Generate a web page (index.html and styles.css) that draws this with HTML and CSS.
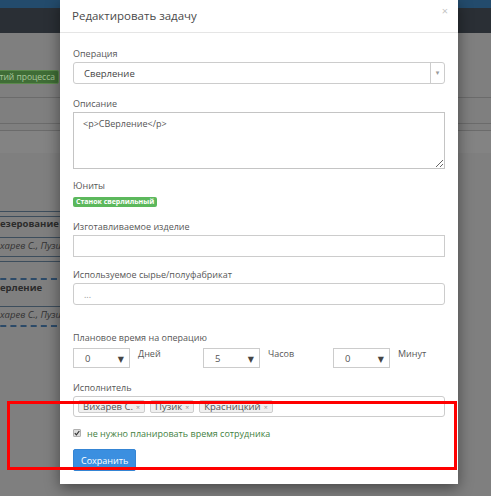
FILE: index.html
```html
<!DOCTYPE html>
<html lang="ru">
<head>
    <meta charset="UTF-8">
    <meta name="viewport" content="width=device-width, initial-scale=1.0">
    <title>Редактировать задачу</title>
    <link rel="stylesheet" href="styles.css">
</head>
<body>
    <div class="page">
        <div class="topline"></div>
        <div class="topbar"></div>
        <div class="toolbar">
            <span class="state-badge">Просмотр событий процесса</span>
        </div>
        <div class="rule"></div>
        <div class="filters"></div>
        <div class="rule"></div>
        <div class="subrow"></div>
        <div class="rule"></div>
        <div class="shade"></div>
        <div class="board">
            <div class="double"></div>
            <div class="task-title">езерование</div>
            <div class="task-people">харев С., Пузик</div>
            <div class="double"></div>
            <div class="dash"></div>
            <div class="task-title tall">ерление</div>
            <div class="task-people">харев С., Пузик</div>
            <div class="dash"></div>
        </div>
    </div>

    <div class="modal">
        <div class="modal-header">
            <span class="modal-title">Редактировать задачу</span>
            <span class="close">×</span>
        </div>
        <div class="modal-body">
            <div class="form-group">
                <label>Операция</label>
                <div class="combo">
                    <span class="combo-value">Сверление</span>
                    <span class="combo-arrow">▾</span>
                </div>
            </div>
            <div class="form-group tight">
                <label>Описание</label>
                <textarea class="text-area" readonly>&lt;p&gt;СВерление&lt;/p&gt;</textarea>
            </div>
            <div class="form-group">
                <label>Юниты</label>
                <span class="unit-badge">Станок сверлильный</span>
            </div>
            <div class="form-group loose">
                <label>Изготавливаемое изделие</label>
                <div class="field square"></div>
            </div>
            <div class="form-group wide">
                <label>Используемое сырье/полуфабрикат</label>
                <div class="field"><span class="placeholder">...</span></div>
            </div>
            <div class="form-group">
                <label>Плановое время на операцию</label>
                <div class="time-row">
                    <div class="time-col">
                        <div class="mini-select"><span>0</span><span class="arrow">▼</span></div>
                        <span class="unit">Дней</span>
                    </div>
                    <div class="time-col">
                        <div class="mini-select"><span>5</span><span class="arrow">▼</span></div>
                        <span class="unit">Часов</span>
                    </div>
                    <div class="time-col">
                        <div class="mini-select"><span>0</span><span class="arrow">▼</span></div>
                        <span class="unit">Минут</span>
                    </div>
                </div>
            </div>
            <div class="form-group small">
                <label>Исполнитель</label>
                <div class="tags">
                    <span class="tag">Вихарев С.<i>×</i></span>
                    <span class="tag">Пузик<i>×</i></span>
                    <span class="tag">Красницкий<i>×</i></span>
                </div>
            </div>
            <div class="check-row">
                <span class="check">
                    <svg width="6" height="6" viewBox="0 0 6 6"><path d="M0.8 3.2 L2.4 4.8 L5.3 1" fill="none" stroke="#333" stroke-width="1.2"/></svg>
                </span>
                <span class="check-label">не нужно планировать время сотрудника</span>
            </div>
            <button class="btn-save">Сохранить</button>
        </div>
    </div>

    <div class="highlight"></div>
</body>
</html>
```

FILE: styles.css
```css
body {
    margin: 0;
    font-family: "Open Sans", "DejaVu Sans", sans-serif;
    background-color: #7f7f7f;
    height: 496px;
    overflow: hidden;
}
.page {
    width: 100%;
}
.topline {
    height: 8px;
    background-color: #234b6c;
}
.topbar {
    height: 25px;
    background-color: #2a2f35;
}
.toolbar {
    height: 64px;
    width: 59px;
    display: flex;
    justify-content: flex-end;
    align-items: flex-start;
}
.state-badge {
    margin-top: 37px;
    flex-shrink: 0;
    height: 14px;
    line-height: 12px;
    font-size: 8.5px;
    padding: 0 3px;
    box-sizing: border-box;
    color: #a9c79c;
    background-color: #3f6d36;
    border: 1px solid #5b8a4c;
    border-radius: 2px;
    white-space: nowrap;
}
.rule {
    height: 1px;
    background-color: #6b6b6b;
}
.filters {
    height: 25px;
}
.subrow {
    height: 6px;
}
.shade {
    height: 22px;
    background-color: #838383;
}
.board {
    padding-top: 58px;
    width: 300px;
    margin-left: -20px;
}
.double {
    height: 6px;
    box-sizing: border-box;
    border-top: 1px solid #3c4d5c;
    border-bottom: 1px solid #3c4d5c;
}
.dash {
    height: 0;
    border-top: 2px dashed #2c4a68;
    margin-top: 16px;
}
.task-title {
    padding-left: 20px;
    font-size: 9.5px;
    font-weight: bold;
    color: #2b2b2b;
    height: 20px;
    line-height: 13px;
    border-bottom: 1px solid #3c4d5c;
}
.task-title.tall {
    height: 26px;
    line-height: 16px;
}
.task-people {
    padding-left: 20px;
    font-size: 9.5px;
    font-style: italic;
    color: #333333;
    height: 18px;
    line-height: 16px;
}
.task-people + .dash {
    margin-top: 0;
}

.modal {
    position: absolute;
    left: 60px;
    top: 0;
    width: 398px;
    height: 484px;
    background-color: #ffffff;
    box-shadow: 0 4px 14px rgba(0, 0, 0, 0.45);
}
.modal-header {
    height: 33px;
    border-bottom: 1px solid #e5e5e5;
    display: flex;
    align-items: center;
    justify-content: space-between;
    padding: 0 10px 0 12px;
    box-sizing: border-box;
}
.modal-title {
    font-size: 11.5px;
    color: #4a4a4a;
    padding-bottom: 1px;
}
.close {
    font-size: 11px;
    color: #c4c4c4;
    align-self: flex-start;
    margin-top: 3px;
}
.modal-body {
    padding: 13px 13px 0 13px;
}
.form-group {
    margin-bottom: 12px;
}
.form-group.tight {
    margin-bottom: 9px;
}
.form-group.loose {
    margin-bottom: 10px;
}
.form-group.wide {
    margin-bottom: 25px;
}
.form-group.small {
    margin-bottom: 8px;
}
label {
    display: block;
    font-size: 9px;
    line-height: 16px;
    color: #575757;
}
.combo {
    height: 22px;
    border: 1px solid #cccccc;
    border-radius: 3px;
    display: flex;
    align-items: center;
    box-sizing: border-box;
}
.combo-value {
    flex-grow: 1;
    padding-left: 10px;
    font-size: 9.5px;
    color: #444444;
}
.combo-arrow {
    width: 13px;
    height: 20px;
    line-height: 20px;
    border-left: 1px solid #cccccc;
    text-align: center;
    font-size: 7px;
    color: #999999;
}
.text-area {
    display: block;
    width: 100%;
    height: 57px;
    box-sizing: border-box;
    border: 1px solid #c4c4c4;
    border-radius: 0;
    margin: 0;
    padding: 4px 9px;
    font-family: "Open Sans", "DejaVu Sans", sans-serif;
    font-size: 9px;
    color: #555555;
    outline: none;
}
.unit-badge {
    display: block;
    width: fit-content;
    margin-top: 3px;
    height: 10px;
    line-height: 10px;
    padding: 0 3px;
    font-size: 7px;
    font-weight: bold;
    color: #ffffff;
    background-color: #5cb85c;
    border-radius: 2px;
}
.field {
    height: 22px;
    border: 1px solid #cccccc;
    border-radius: 3px;
    box-sizing: border-box;
    padding-left: 10px;
    display: flex;
    align-items: center;
}
.field.square {
    border-radius: 0;
}
.placeholder {
    font-size: 9px;
    color: #999999;
}
.time-row {
    display: grid;
    grid-template-columns: repeat(3, 1fr);
    column-gap: 18px;
    margin-top: 2px;
}
.time-col {
    display: flex;
    align-items: flex-start;
}
.mini-select {
    width: 57px;
    height: 20px;
    border: 1px solid #cccccc;
    box-sizing: border-box;
    display: flex;
    align-items: center;
    justify-content: space-between;
    padding: 0 5px 0 11px;
    font-size: 9.5px;
    color: #555555;
}
.mini-select .arrow {
    font-size: 8px;
    color: #444444;
}
.unit {
    margin-left: 8px;
    font-size: 9px;
    color: #575757;
    line-height: 12px;
}
.tags {
    height: 21px;
    border: 1px solid #cccccc;
    border-radius: 3px;
    box-sizing: border-box;
    display: flex;
    align-items: center;
    gap: 5px;
    padding-left: 4px;
}
.tag {
    height: 13px;
    line-height: 12px;
    box-sizing: border-box;
    padding: 0 4px;
    font-size: 9.5px;
    color: #555555;
    background-color: #f0f0f0;
    border: 1px solid #cccccc;
    border-radius: 2px;
    overflow: hidden;
}
.tag i {
    font-style: normal;
    font-size: 7px;
    color: #999999;
    margin-left: 3px;
}
.check-row {
    display: flex;
    align-items: center;
    height: 16px;
}
.check {
    width: 8px;
    height: 8px;
    box-sizing: border-box;
    border: 1px solid #b0b0b0;
    background-color: #dddddd;
    border-radius: 1px;
    display: flex;
    align-items: center;
    justify-content: center;
}
.check-label {
    margin-left: 6px;
    font-size: 9px;
    color: #3f7f3f;
}
.btn-save {
    display: block;
    margin-top: 8px;
    height: 22px;
    padding: 0 7px;
    border: 1px solid #3585d4;
    border-radius: 2px;
    background-color: #3b8fe0;
    color: #ffffff;
    font-family: "Open Sans", "DejaVu Sans", sans-serif;
    font-size: 9px;
}
.highlight {
    position: absolute;
    left: 7px;
    top: 401px;
    width: 450px;
    height: 69px;
    box-sizing: border-box;
    border: 3px solid #ff0000;
}
```
